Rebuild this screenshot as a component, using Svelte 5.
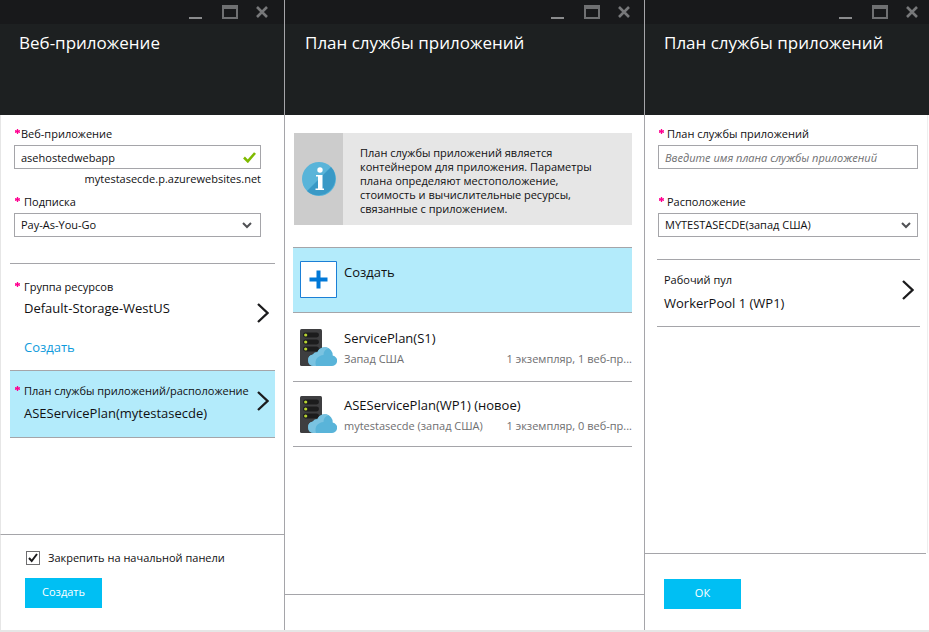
<script>
  let appName = $state('asehostedwebapp');
  let subscription = $state('Pay-As-You-Go');
  let pinned = $state(true);
  let planName = $state('');
  let location = $state('mytestasecde');

  const plans = [
    { name: 'ServicePlan(S1)', place: 'Запад США', usage: '1 экземпляр, 1 веб-пр...' },
    { name: 'ASEServicePlan(WP1) (новое)', place: 'mytestasecde (запад США)', usage: '1 экземпляр, 0 веб-пр...' }
  ];
</script>

{#snippet head(title)}
  <header>
    <div class="bar">
      <button class="win" aria-label="Свернуть">
        <svg width="13" height="14" viewBox="0 0 13 14"><path d="M0 12h13v2H0z" fill="#8a8b8d" /></svg>
      </button>
      <button class="win" aria-label="Развернуть">
        <svg width="16" height="14" viewBox="0 0 16 14"><path d="M0 0h16v14H0zM2 4v8h12V4z" fill="#6f7072" fill-rule="evenodd" /></svg>
      </button>
      <button class="win" aria-label="Закрыть">
        <svg width="12" height="14" viewBox="0 0 12 14"><path d="M1 2l10 10M11 2L1 12" stroke="#77787a" stroke-width="2.6" /></svg>
      </button>
    </div>
    <h1>{title}</h1>
  </header>
{/snippet}

{#snippet star()}
  <svg class="star" width="5" height="5" viewBox="0 0 5 5" aria-hidden="true"><path d="M2.5 0v5M0 1.500l5 2M5 1.500l-5 2" stroke="#ff0090" stroke-width="1.300" /></svg>
{/snippet}

{#snippet next()}
  <svg class="next" width="12" height="20" viewBox="0 0 12 20" aria-hidden="true"><path d="M1 1l9.5 9L1 19" fill="none" stroke="#1b1b1d" stroke-width="2.3" /></svg>
{/snippet}

{#snippet down()}
  <svg class="mark" width="10" height="7" viewBox="0 0 10 7" aria-hidden="true"><path d="M1 1l4 4 4-4" fill="none" stroke="#505154" stroke-width="2" /></svg>
{/snippet}

{#snippet server()}
  <svg width="37" height="38" viewBox="0 0 37 38" aria-hidden="true">
    <rect width="22" height="37" rx="1.5" fill="#3e3e40" />
    {#each [6, 13, 20] as y}
      <rect x="3" y={y - 2.4} width="16" height="4.8" rx="2.4" fill="#1c1c1d" />
      <circle cx="5.7" cy={y} r="1.6" fill="#b8d432" />
    {/each}
    <path d="M13.5 37a5.8 5.8 0 0 1-.6-11.500 4.600 4.600 0 0 1 4.300-2.100 8 8 0 0 1 15.500 3.100A5.300 5.300 0 0 1 31 37z" fill="#59b4d9" />
    <path d="M13.500 37a5.800 5.800 0 0 1-.6-11.500 4.600 4.600 0 0 1 4.300-2.100 8 8 0 0 1 11.300-4.100c-3.500 1-5 3.500-5 6.700-5 .6-9.500 4-7.500 11z" fill="#7ac3e1" />
  </svg>
{/snippet}

<div class="page">
  <section class="blade first">
    {@render head('Веб-приложение')}
    <div class="content">
      <div class="form">
        <div class="field tight">
          <label for="app">{@render star()}Веб-приложение</label>
          <div class="box">
            <input id="app" type="text" bind:value={appName} />
            <svg class="mark" width="13" height="11" viewBox="0 0 13 11" aria-hidden="true"><path d="M1 5.500l3.800 3.800L12 1" fill="none" stroke="#7fba00" stroke-width="2.600" /></svg>
          </div>
          <p class="hint">mytestasecde.p.azurewebsites.net</p>
        </div>
        <div class="field">
          <label for="sub">{@render star()}Подписка</label>
          <div class="box">
            <select id="sub" bind:value={subscription}><option>Pay-As-You-Go</option></select>
            {@render down()}
          </div>
        </div>
      </div>
      <div class="group">
        <button class="row">
          <span class="text"><span class="small">{@render star()}Группа ресурсов</span><span class="big">Default-Storage-WestUS</span></span>
          {@render next()}
        </button>
        <a href="#new">Создать</a>
      </div>
      <div class="plan">
        <button class="row">
          <span class="text"><span class="small">{@render star()}План службы приложений/расположение</span><span class="big">ASEServicePlan(mytestasecde)</span></span>
          {@render next()}
        </button>
      </div>
    </div>
    <footer>
      <div class="pin">
        <span class="tick">
          <input id="pin" type="checkbox" bind:checked={pinned} />
          {#if pinned}
            <svg width="10" height="10" viewBox="0 0 10 10" aria-hidden="true"><path d="M1 5l2.700 3L9 1" fill="none" stroke="#1b1b1d" stroke-width="2" /></svg>
          {/if}
        </span>
        <label for="pin">Закрепить на начальной панели</label>
      </div>
      <button class="action">Создать</button>
    </footer>
  </section>

  <section class="blade second">
    {@render head('План службы приложений')}
    <div class="content">
      <div class="info">
        <div class="badge">
          <svg width="34" height="34" viewBox="0 0 34 34" aria-hidden="true">
            <circle cx="17" cy="17" r="17" fill="#59b4d9" />
            <path d="M29 5A17 17 0 0 1 5 29z" fill="#3999c6" />
            <circle cx="18" cy="8" r="2.700" fill="#fff" />
            <path d="M14 13h6.500v13.500H22V28h-8.500v-1.500H16v-12h-2z" fill="#fff" />
          </svg>
        </div>
        <p>План службы приложений является контейнером для приложения. Параметры плана определяют местоположение, стоимость и вычислительные ресурсы, связанные с приложением.</p>
      </div>
      <div class="list">
        <button class="item create">
          <svg width="37" height="37" viewBox="0 0 37 37" aria-hidden="true"><path d="M.5.5h36v36H.5z" fill="#fff" stroke="#1b7fd6" /><path d="M18.500 9.500v18M9.500 18.500h18" stroke="#0078d7" stroke-width="4" /></svg>
          <span class="big">Создать</span>
        </button>
        {#each plans as plan}
          <button class="item">
            {@render server()}
            <span class="lines">
              <span class="big">{plan.name}</span>
              <span class="detail"><span>{plan.place}</span><span>{plan.usage}</span></span>
            </span>
          </button>
        {/each}
      </div>
    </div>
    <footer></footer>
  </section>

  <section class="blade third">
    {@render head('План службы приложений')}
    <div class="content">
      <div class="form">
        <div class="field">
          <label for="name">{@render star()}План службы приложений</label>
          <div class="box"><input id="name" type="text" placeholder="Введите имя плана службы приложений" bind:value={planName} /></div>
        </div>
        <div class="field">
          <label for="loc">{@render star()}Расположение</label>
          <div class="box">
            <select id="loc" bind:value={location}><option value="mytestasecde">MYTESTASECDE(запад США)</option></select>
            {@render down()}
          </div>
        </div>
      </div>
      <div class="pool">
        <button class="row">
          <span class="text"><span class="small">Рабочий пул</span><span class="big">WorkerPool 1 (WP1)</span></span>
          {@render next()}
        </button>
      </div>
    </div>
    <footer><button class="action">ОК</button></footer>
  </section>
</div>

<style>
  :global(body) { margin: 0; background: #fff; }
  .page {
    display: grid;
    grid-template-columns: 285fr 360fr 284fr;
    box-sizing: border-box;
    min-height: 100vh;
    border-bottom: 2px solid #e6e6e6;
    font: 11px/16px "Open Sans", "Noto Sans", sans-serif;
    color: #101012;
  }
  .page :is(button, input, select) { font: inherit; color: inherit; border-radius: 0; margin: 0; box-sizing: border-box; }
  button { background: none; border: 0; padding: 0; text-align: left; cursor: pointer; }
  p, h1 { margin: 0; }
  svg { display: block; flex: none; }
  .blade { display: flex; flex-direction: column; min-width: 0; border-right: 1px solid #a5a5a9; }
  .third { border: 0; }
  header { height: 115px; background: #1d2021; color: #fff; }
  .bar { display: flex; justify-content: flex-end; gap: 18px; height: 24px; box-sizing: border-box; padding: 5px 14px 0 0; background: #18191b; }
  .first .bar { padding-right: 16px; }
  .third .bar { padding-right: 11px; }
  .win { display: block; height: 14px; }
  .bar .win:first-child { padding-right: 2px; }
  h1 { padding: 7px 19px 0; font-size: 17px; line-height: 24px; font-weight: 400; }
  .second h1 { padding-left: 20px; }
  .content { flex: 1; padding-top: 11px; }
  .first .content, .first footer { border-left: 1px solid #e6e6e6; }
  .third .content { border-right: 1px solid #eee; margin-right: 1px; }
  .form { padding: 0 23px 26px 13px; }
  .third .form { padding: 0 9px 22px 13px; }
  .field { display: flex; flex-direction: column; gap: 3px; }
  .field + .field { margin-top: 25px; }
  .tight + .field { margin-top: 8px; }
  .field label, .small { display: flex; gap: 4px; }
  .first .field label, .first .small { padding-left: 1px; }
  .third label { padding-left: 1px; gap: 3px; }
  .field.tight label { gap: 1px; }
  .star { margin-top: 3px; }
  .box { position: relative; }
  .box input, .box select {
    display: block; width: 100%; height: 24px; padding: 0 24px 0 6px;
    border: 1px solid #a5a5a9; background: #fff; appearance: none; outline: 0;
  }
  .box input::placeholder { color: #6e6e70; font-style: italic; opacity: 1; }
  .mark { position: absolute; right: 5px; top: 7px; pointer-events: none; }
  select + .mark { right: 9px; top: 9px; }
  .third .mark { right: 7px; }
  .hint { text-align: right; line-height: 14px; }
  .group { margin: 0 9px; border-top: 1px solid #a5a5a9; height: 106px; }
  .row { display: flex; justify-content: space-between; width: 100%; }
  .text { display: flex; flex-direction: column; gap: 4px; white-space: nowrap; }
  .big { font-size: 13px; line-height: 18px; }
  .first .text .big { padding-left: 10px; }
  .group .row { padding: 15px 6px 0 4px; }
  .group .next { margin-top: 24px; }
  .group a { display: inline-block; margin: 15px 0 0 14px; font-size: 13px; line-height: 18px; color: #0f9bdc; text-decoration: none; }
  .plan { margin: 0 9px; background: #b3ebfb; border: 1px solid #a5a5a9; border-width: 1px 0; }
  .plan .row { height: 66px; padding: 12px 6px 0 4px; }
  .plan .text { gap: 5px; }
  .plan .next { margin-top: 8px; }
  .pool { margin: 0 7px 0 12px; border: 1px solid #a5a5a9; border-width: 1px 0; }
  .pool .row { height: 66px; padding: 12px 6px 0 7px; }
  .pool .text { gap: 6px; }
  .pool .next { margin-top: 8px; }
  footer { border-top: 1px solid #a5a5a9; box-sizing: border-box; height: 36px; }
  .first footer { height: 96px; padding: 15px 24px 0; }
  .third footer { height: 77px; padding: 25px 19px 0; margin-right: 3px; }
  .pin { display: flex; align-items: center; gap: 8px; margin-bottom: 12px; padding-left: 1px; }
  .tick { position: relative; }
  .tick input { display: block; appearance: none; width: 14px; height: 14px; border: 1px solid #6e6e70; background: #fff; }
  .tick svg { position: absolute; left: 2px; top: 2px; pointer-events: none; }
  .page .action { width: 77px; height: 30px; background: #00bff3; color: #fff; text-align: center; padding-bottom: 2px; }
  .second .content { padding: 18px 12px 0 8px; }
  .info { display: flex; margin-left: 1px; background: #e6e6e6; }
  .badge { display: grid; place-items: center; flex: none; width: 49px; background: #ccc; }
  .info p { padding: 13px 38px 9px 17px; line-height: 14px; }
  .list { margin-top: 22px; border-top: 1px solid #a5a5a9; }
  .item { display: flex; gap: 7px; width: 100%; height: 65px; padding: 14px 0 0 7px; border-bottom: 1px solid #a5a5a9; }
  .create { background: #b3ebfb; padding-top: 13px; }
  .create .big { padding-top: 2px; }
  .create + .item { height: 69px; padding-top: 16px; }
  .lines { display: flex; flex-direction: column; gap: 4px; flex: 1; min-width: 0; }
  .detail { display: flex; justify-content: space-between; color: #6e6e70; white-space: nowrap; }
</style>
